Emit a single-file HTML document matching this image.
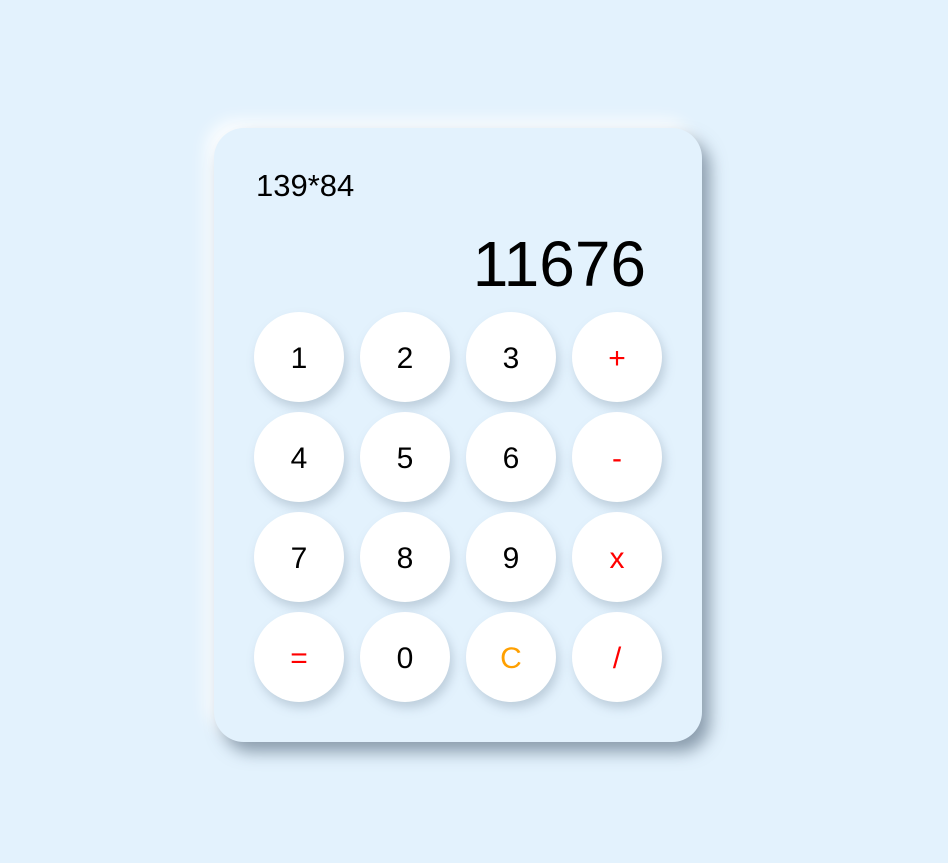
<!DOCTYPE html>
<html><head><style>
html,body{margin:0;width:948px;height:863px;background:#e3f2fd;overflow:hidden;font-family:"Liberation Sans",Arial,sans-serif}
.card{position:absolute;left:214px;top:128px;width:488px;height:614px;border-radius:30px;background:#e3f2fd;
box-shadow:8px 10px 16px rgba(80,100,120,.6),-8px -8px 16px rgba(255,255,255,.9)}
.expr{position:absolute;left:42px;top:40px;font-size:31px;color:#000}
.res{position:absolute;right:56px;top:99px;font-size:64px;color:#000}
.b{position:absolute;width:90px;height:90px;border-radius:50%;background:#fff;box-shadow:3px 6px 10px rgba(120,140,160,.35);
display:flex;align-items:center;justify-content:center;font-size:30px;color:#000;padding-top:3px;box-sizing:border-box}
.r{color:#f00}.o{color:#ffa000}
</style></head><body>
<div class="card">
<div class="expr">139*84</div>
<div class="res">11676</div>
<div class="b" style="left:40px;top:184px">1</div>
<div class="b" style="left:146px;top:184px">2</div>
<div class="b" style="left:252px;top:184px">3</div>
<div class="b r" style="left:358px;top:184px">+</div>
<div class="b" style="left:40px;top:284px">4</div>
<div class="b" style="left:146px;top:284px">5</div>
<div class="b" style="left:252px;top:284px">6</div>
<div class="b r" style="left:358px;top:284px">-</div>
<div class="b" style="left:40px;top:384px">7</div>
<div class="b" style="left:146px;top:384px">8</div>
<div class="b" style="left:252px;top:384px">9</div>
<div class="b r" style="left:358px;top:384px">x</div>
<div class="b r" style="left:40px;top:484px">=</div>
<div class="b" style="left:146px;top:484px">0</div>
<div class="b o" style="left:252px;top:484px">C</div>
<div class="b r" style="left:358px;top:484px">/</div>
</div>
</body></html>
